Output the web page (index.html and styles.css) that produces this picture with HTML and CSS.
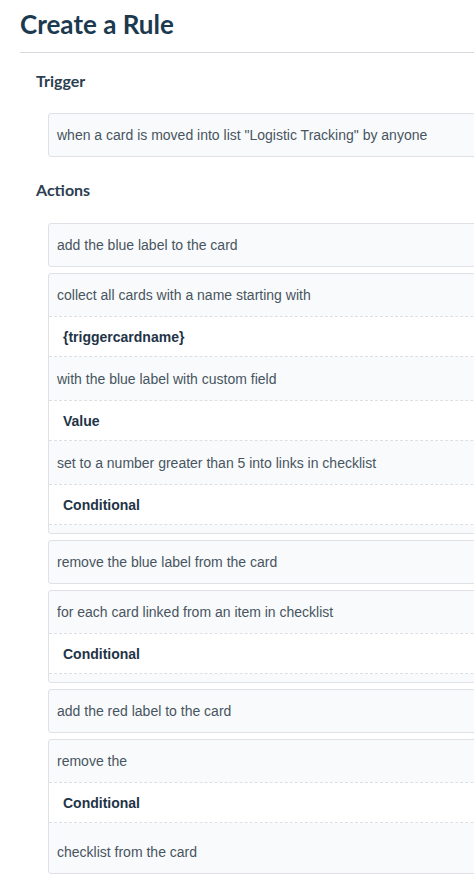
FILE: index.html
```html
<!DOCTYPE html>
<html>
<head>
<meta charset="utf-8">
<title>Create a Rule</title>
<link rel="stylesheet" href="styles.css">
</head>
<body>
<div class="page">
  <h1 class="title">Create a Rule</h1>
  <div class="rule-line"></div>

  <h2 class="section trigger-h">Trigger</h2>
  <div class="box trigger-box">
    <div class="txt">when a card is moved into list "Logistic Tracking" by anyone</div>
  </div>

  <h2 class="section actions-h">Actions</h2>
  <div class="actions">
    <div class="box">
      <div class="txt">add the blue label to the card</div>
    </div>
    <div class="box">
      <div class="txt">collect all cards with a name starting with</div>
      <div class="var">{triggercardname}</div>
      <div class="txt after">with the blue label with custom field</div>
      <div class="var">Value</div>
      <div class="txt after">set to a number greater than 5 into links in checklist</div>
      <div class="var">Conditional</div>
      <div class="spacer"></div>
    </div>
    <div class="box">
      <div class="txt">remove the blue label from the card</div>
    </div>
    <div class="box">
      <div class="txt">for each card linked from an item in checklist</div>
      <div class="var">Conditional</div>
      <div class="spacer"></div>
    </div>
    <div class="box">
      <div class="txt">add the red label to the card</div>
    </div>
    <div class="box">
      <div class="txt">remove the</div>
      <div class="var">Conditional</div>
      <div class="spacer"></div>
      <div class="txt">checklist from the card</div>
    </div>
  </div>
</div>
</body>
</html>
```

FILE: styles.css
```css
html, body {
  margin: 0;
  padding: 0;
  background: #ffffff;
  overflow: hidden;
}

.page {
  width: 700px;
  padding-left: 20px;
  box-sizing: border-box;
}

.title {
  margin: 0;
  padding-top: 8px;
  font-family: "Lato", "Liberation Sans", sans-serif;
  font-weight: 700;
  font-size: 26px;
  line-height: 32px;
  color: #1c3a4f;
}

.rule-line {
  margin-top: 12px;
  height: 1px;
  background: #d5d8dc;
}

.section {
  margin: 0;
  padding-left: 16px;
  font-family: "Lato", "Liberation Sans", sans-serif;
  font-weight: 700;
  font-size: 16px;
  line-height: 20px;
  color: #2c4051;
}

.trigger-h {
  margin-top: 18px;
}

.trigger-box {
  margin-top: 22px;
}

.actions-h {
  margin-top: 23px;
}

.actions {
  margin-top: 23px;
  display: flex;
  flex-direction: column;
  gap: 6px;
}

.box {
  margin-left: 28px;
  border: 1px solid #dfe1e6;
  border-radius: 3px;
  background: #f9fafc;
  display: flex;
  flex-direction: column;
}

.txt {
  height: 42px;
  padding: 0 8px;
  display: flex;
  align-items: center;
  font-family: "Liberation Sans", Arial, sans-serif;
  font-size: 14px;
  color: #47555f;
}

.txt.after {
  height: 43px;
}

.var {
  height: 39px;
  padding: 0 14px;
  display: flex;
  align-items: center;
  background: #ffffff;
  border-top: 1px dashed #dcdfe4;
  border-bottom: 1px dashed #dcdfe4;
  font-family: "Liberation Sans", Arial, sans-serif;
  font-weight: 700;
  font-size: 14px;
  color: #1f3447;
}

.spacer {
  height: 8px;
}
```
